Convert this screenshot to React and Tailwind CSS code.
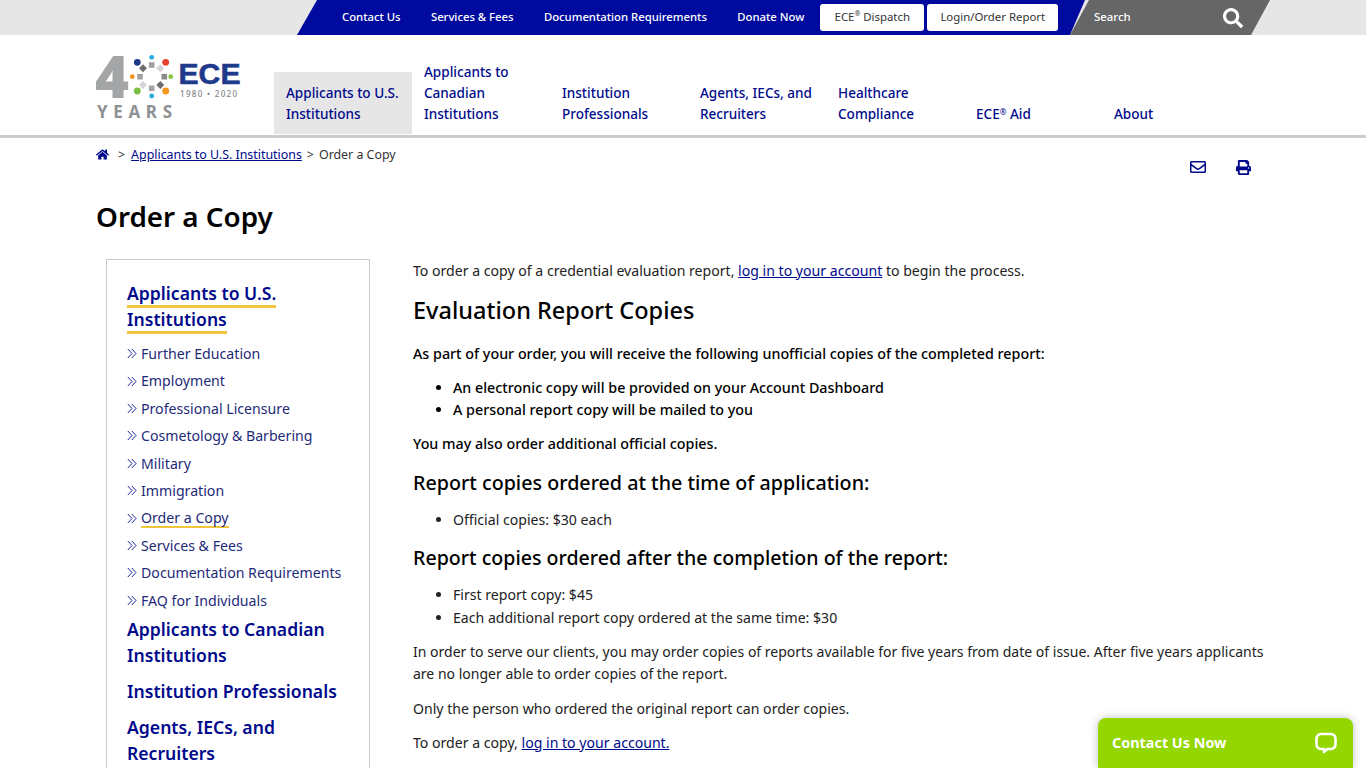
import { FaHome, FaPrint, FaRegEnvelope, FaSearch } from 'react-icons/fa';

const topLinks = ['Contact Us', 'Services & Fees', 'Documentation Requirements', 'Donate Now'];

const navItems = [
  { label: ['Applicants to U.S.', 'Institutions'], active: true },
  { label: ['Applicants to', 'Canadian', 'Institutions'] },
  { label: ['Institution', 'Professionals'] },
  { label: ['Agents, IECs, and', 'Recruiters'] },
  { label: ['Healthcare', 'Compliance'] },
  { label: [<>ECE<sup className="text-[8px]">®</sup> Aid</>] },
  { label: ['About'] },
];

const sideLinks = [
  'Further Education',
  'Employment',
  'Professional Licensure',
  'Cosmetology & Barbering',
  'Military',
  'Immigration',
  'Order a Copy',
  'Services & Fees',
  'Documentation Requirements',
  'FAQ for Individuals',
];

function Logo() {
  const dots = [
    [55.7, 2.3, 2.4, '#27aae1'], [69.7, 7.3, 3.4, '#e8432e'], [74.7, 21.7, 2.4, '#8cc63f'], [69.7, 36, 3.4, '#f7941d'],
    [55.7, 41, 2.4, '#27aae1'], [41.3, 36, 3.4, '#7ac143'], [36.3, 21.7, 2.4, '#f7941d'], [41.3, 7.3, 3.4, '#1f3a8a'],
  ];
  const squares = [
    [55.7, 10, '#a0a0a4'], [64.3, 13.3, '#d4d4d6'], [68.3, 21.7, '#8a8a8e'], [64.3, 30, '#6d6d70'],
    [55.7, 33.3, '#a5a5a8'], [47, 30, '#d4d4d6'], [44, 21.7, '#a0a0a4'], [47, 13.3, '#6d6d70'],
  ];
  return (
    <svg width="152" height="88" viewBox="-2 -20 152 88" className="-ml-[2px] block">
      <text x="-1" y="43" fontFamily="Noto Sans, sans-serif" fontWeight="900" fontSize="58" fill="#a3a5a6">4</text>
      {squares.map(([x, y, c], i) => (
        <rect key={i} x={x - 2.8} y={y - 2.8} width="5.6" height="5.6" fill={c} transform={`rotate(${i % 2 ? 45 : 0} ${x} ${y})`} />
      ))}
      {dots.map(([x, y, r, c], i) => (
        <circle key={i} cx={x} cy={y} r={r} fill={c} />
      ))}
      <text x="82.5" y="28.5" fontFamily="Liberation Sans, sans-serif" fontWeight="700" fontSize="29" fill="#1f3a8a" stroke="#1f3a8a" strokeWidth="0.6" textLength="62" lengthAdjust="spacingAndGlyphs">ECE</text>
      <text x="84" y="41.5" fontFamily="Noto Sans, sans-serif" fontWeight="500" fontSize="8" fill="#808285" textLength="57">1980 • 2020</text>
      <text x="1" y="63" fontFamily="Noto Sans, sans-serif" fontWeight="700" fontSize="17" fill="#8f9193" textLength="75">YEARS</text>
    </svg>
  );
}

function DoubleChevron() {
  return (
    <svg width="10" height="11" viewBox="0 0 10 11" fill="none" stroke="#000a8c" strokeWidth="0.9" className="mr-[4px] shrink-0">
      <path d="M0.8 1 5 5.5 0.8 10" />
      <path d="M4.8 1 9 5.5 4.8 10" />
    </svg>
  );
}

function ChatIcon() {
  return (
    <svg width="22" height="22" viewBox="0 0 22 22" fill="none" stroke="white" strokeWidth="2.6" strokeLinejoin="round">
      <path d="M6 2h10a4.5 4.5 0 0 1 4.5 4.5v6A4.5 4.5 0 0 1 16 17h-3.5L9 20v-3H6a4.5 4.5 0 0 1-4.5-4.5v-6A4.5 4.5 0 0 1 6 2z" />
    </svg>
  );
}

function TopBar() {
  return (
    <div className="flex h-[35px] bg-[#e6e6e6]">
      <div className="ml-[297px] flex w-[788px] items-center bg-[#000a9e] pl-[45px] [clip-path:polygon(20px_0,100%_0,calc(100%-15px)_100%,0_100%)]">
        <div className="-mt-[1px] flex gap-[30.33px] text-[11.3px] font-medium whitespace-nowrap text-white">
          {topLinks.map((t) => (
            <span key={t}>{t}</span>
          ))}
        </div>
        <div className="ml-4 flex gap-[3px] text-[11.4px] whitespace-nowrap text-[#333]">
          <span className="flex h-[27px] w-[104px] items-center justify-center rounded-[3px] bg-white pb-px">ECE<sup className="text-[7px]">®</sup>&nbsp;Dispatch</span>
          <span className="flex h-[27px] w-[131px] items-center justify-center rounded-[3px] bg-white pb-px">Login/Order Report</span>
        </div>
      </div>
      <div className="-ml-[15px] flex w-[200px] items-center bg-[#666666] pl-[24px] text-[11.4px] font-medium text-white [clip-path:polygon(19px_0,100%_0,calc(100%-19px)_100%,0_100%)]">
        <span className="pb-[2px]">Search</span>
        <FaSearch className="ml-[92px]" size={20} />
      </div>
    </div>
  );
}

function MainNav() {
  return (
    <div className="flex h-[103px] border-b-[3px] border-[#cccccc] pl-[96px]">
      <div className="w-[178px]">
        <Logo />
      </div>
      <div className="flex h-[99px] items-end">
        {navItems.map((item, i) => (
          <div
            key={i}
            className={`w-[138px] px-3 pb-[9px] text-[13.55px] leading-[21px] font-medium whitespace-nowrap text-[#000a8c] ${item.active ? 'bg-[#e6e6e6] pt-[11px]' : ''}`}
          >
            {item.label.map((line, j) => (
              <div key={j}>{line}</div>
            ))}
          </div>
        ))}
      </div>
    </div>
  );
}

function Sidebar() {
  return (
    <div className="ml-[10px] h-[600px] w-[264px] shrink-0 border border-[#cccccc] px-5 pt-[20px]">
      <div className="text-[17.6px] leading-[26px] font-semibold text-[#000a8c]">
        <span className="border-b-[3px] border-[#f2c63c]">Applicants to U.S.</span>
        <br />
        <span className="border-b-[3px] border-[#f2c63c]">Institutions</span>
      </div>
      <div className="mt-[8px] flex flex-col">
        {sideLinks.map((t) => (
          <div key={t} className="flex h-[27.4px] items-center text-[14.15px] text-[#1e2a78]">
            <DoubleChevron />
            <span className={t === 'Order a Copy' ? 'border-b-2 border-[#f2c63c] leading-[17px]' : ''}>{t}</span>
          </div>
        ))}
      </div>
      <div className="mt-[2.5px] flex flex-col gap-[10px] text-[17.6px] leading-[26px] font-semibold text-[#000a8c]">
        <div>Applicants to Canadian<br />Institutions</div>
        <div>Institution Professionals</div>
        <div>Agents, IECs, and<br />Recruiters</div>
      </div>
    </div>
  );
}

function Content() {
  return (
    <div className="ml-[43px] w-[860px] text-[14.1px] leading-[22.4px] text-[#222]">
      <p className="mt-[1px]">
        To order a copy of a credential evaluation report, <a className="text-[#000a8c] underline">log in to your account</a> to begin the process.
      </p>
      <h2 className="mt-[12px] text-[23.5px] leading-[32px] font-medium text-black">Evaluation Report Copies</h2>
      <p className="mt-[17px] text-[14.3px] font-medium text-black">As part of your order, you will receive the following unofficial copies of the completed report:</p>
      <ul className="mt-[11px] list-disc pl-10 text-[14.3px] font-medium text-black">
        <li>An electronic copy will be provided on your Account Dashboard</li>
        <li>A personal report copy will be mailed to you</li>
      </ul>
      <p className="mt-[11px] text-[14.3px] font-medium text-black">You may also order additional official copies.</p>
      <h3 className="mt-[14px] text-[19.7px] leading-[28px] font-medium text-black">Report copies ordered at the time of application:</h3>
      <ul className="mt-[12px] list-disc pl-10">
        <li>Official copies: $30 each</li>
      </ul>
      <h3 className="mt-[13px] text-[19.6px] leading-[28px] font-medium text-black">Report copies ordered after the completion of the report:</h3>
      <ul className="mt-[12px] list-disc pl-10">
        <li>First report copy: $45</li>
        <li>Each additional report copy ordered at the same time: $30</li>
      </ul>
      <p className="mt-[12px] text-[14.02px] leading-[22px]">
        In order to serve our clients, you may order copies of reports available for five years from date of issue. After five years applicants are no longer able to order copies of the report.
      </p>
      <p className="mt-[13px]">Only the person who ordered the original report can order copies.</p>
      <p className="mt-[11px]">
        To order a copy, <a className="text-[#000a8c] underline">log in to your account.</a>
      </p>
    </div>
  );
}

export default function App() {
  return (
    <div className="relative h-screen overflow-hidden bg-white font-['Noto_Sans',sans-serif]">
      <TopBar />
      <MainNav />
      <div className="flex h-[50px] items-start pt-[8px] pr-[115px] pl-[96px] text-[12.4px] leading-[18px] text-[#333]">
        <FaHome size={13} className="mt-[2px] text-[#000a8c]" />
        <span className="ml-[9px]">&gt;</span>
        <a className="ml-[6px] text-[#000a8c] underline">Applicants to U.S. Institutions</a>
        <span className="ml-[5px]">&gt;</span>
        <span className="ml-[5px]">Order a Copy</span>
        <div className="mt-[13px] ml-auto flex items-center gap-[30px] text-[#000a8c]">
          <FaRegEnvelope size={16} />
          <FaPrint size={15} />
        </div>
      </div>
      <h1 className="mt-[9px] pl-[96px] text-[27.8px] leading-[38px] font-semibold text-black">Order a Copy</h1>
      <div className="mt-[24px] flex pl-[96px]">
        <Sidebar />
        <Content />
      </div>
      <div className="absolute right-[13px] bottom-0 flex h-[50px] w-[255px] items-start justify-between rounded-t-[8px] bg-[#94d600] pt-[14px] pr-[16px] pl-[14px] font-bold text-white shadow-[0_0_8px_rgba(0,0,0,0.25)]">
        <span className="text-[14.4px] leading-[22px]">Contact Us Now</span>
        <ChatIcon />
      </div>
    </div>
  );
}
